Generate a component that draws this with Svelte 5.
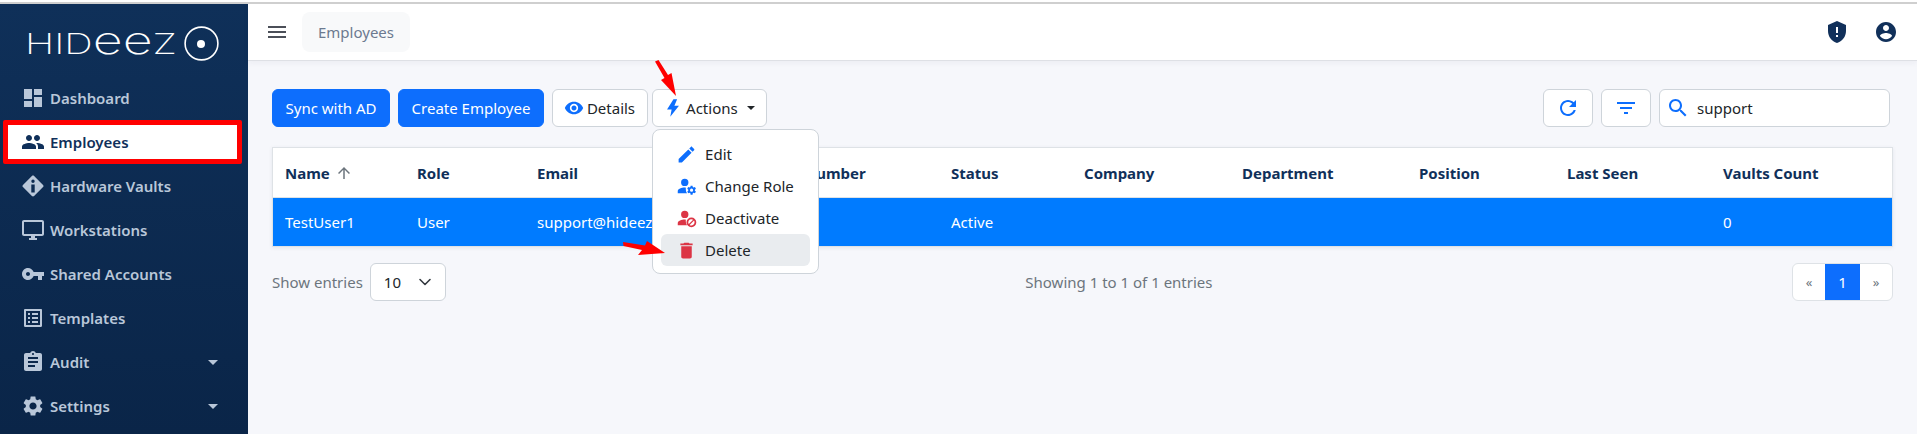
<script>
  const icons = {
    dashboard: 'M3 13h8V3H3v10zm0 8h8v-6H3v6zm10 0h8V11h-8v10zm0-18v6h8V3h-8z',
    people: 'M16 11c1.66 0 2.99-1.34 2.99-3S17.66 5 16 5c-1.66 0-3 1.34-3 3s1.34 3 3 3zm-8 0c1.66 0 2.99-1.34 2.99-3S9.66 5 8 5C6.34 5 5 6.34 5 8s1.34 3 3 3zm0 2c-2.33 0-7 1.17-7 3.5V19h14v-2.5c0-2.33-4.67-3.5-7-3.5zm8 0c-.29 0-.62.02-.97.05 1.16.84 1.97 1.97 1.97 3.45V19h6v-2.5c0-2.33-4.67-3.5-7-3.5z',
    vault: 'M12 1.5c-.4 0-.8.15-1.1.45L1.95 10.9c-.6.6-.6 1.6 0 2.2l8.95 8.95c.6.6 1.6.6 2.2 0l8.95-8.95c.6-.6.6-1.6 0-2.2L13.1 1.95c-.3-.3-.7-.45-1.1-.45zM12 5.6a1.7 1.7 0 1 1 0 3.4 1.7 1.7 0 0 1 0-3.4zM10.3 10.6h3.4v8h-3.4z',
    desktop: 'M21 2H3c-1.1 0-2 .9-2 2v12c0 1.1.9 2 2 2h7v2H8v2h8v-2h-2v-2h7c1.1 0 2-.9 2-2V4c0-1.1-.9-2-2-2zm0 14H3V4h18v12z',
    key: 'M12.65 10C11.83 7.67 9.61 6 7 6c-3.31 0-6 2.69-6 6s2.69 6 6 6c2.61 0 4.83-1.67 5.65-4H17v4h4v-4h2v-4H12.65zM7 14c-1.1 0-2-.9-2-2s.9-2 2-2 2 .9 2 2-.9 2-2 2z',
    list: 'M19 5v14H5V5h14m1.1-2H3.9c-.5 0-.9.4-.9.9v16.2c0 .4.4.9.9.9h16.2c.4 0 .9-.5.9-.9V3.9c0-.5-.5-.9-.9-.9zM11 7h6v2h-6V7zm0 4h6v2h-6v-2zm0 4h6v2h-6zM7 7h2v2H7zm0 4h2v2H7zm0 4h2v2H7z',
    assignment: 'M19 3h-4.18C14.4 1.84 13.3 1 12 1c-1.3 0-2.4.84-2.82 2H5c-1.1 0-2 .9-2 2v14c0 1.1.9 2 2 2h14c1.1 0 2-.9 2-2V5c0-1.1-.9-2-2-2zm-7 0c.55 0 1 .45 1 1s-.45 1-1 1-1-.45-1-1 .45-1 1-1zm2 14H7v-2h7v2zm3-4H7v-2h10v2zm0-4H7V7h10v2z',
    settings: 'M19.14 12.94c.04-.3.06-.61.06-.94 0-.32-.02-.64-.07-.94l2.03-1.58c.18-.14.23-.41.12-.61l-1.92-3.32c-.12-.22-.37-.29-.59-.22l-2.39.96c-.5-.38-1.03-.7-1.62-.94l-.36-2.54c-.04-.24-.24-.41-.48-.41h-3.84c-.24 0-.43.17-.47.41l-.36 2.54c-.59.24-1.13.57-1.62.94l-2.39-.96c-.22-.08-.47 0-.59.22L2.74 8.87c-.12.21-.08.47.12.61l2.03 1.58c-.05.3-.09.63-.09.94s.02.64.07.94l-2.03 1.58c-.18.14-.23.41-.12.61l1.92 3.32c.12.22.37.29.59.22l2.39-.96c.5.38 1.03.7 1.62.94l.36 2.54c.05.24.24.41.48.41h3.84c.24 0 .44-.17.47-.41l.36-2.54c.59-.24 1.13-.56 1.62-.94l2.39.96c.22.08.47 0 .59-.22l1.92-3.32c.12-.22.07-.47-.12-.61l-2.01-1.58zM12 15.6c-1.98 0-3.6-1.62-3.6-3.6s1.62-3.6 3.6-3.6 3.6 1.62 3.6 3.6-1.62 3.6-3.6 3.6z',
    menu: 'M3 18h18v-2H3v2zm0-5h18v-2H3v2zm0-7v2h18V6H3z',
    shield: 'M12 1L3 5v6c0 5.55 3.84 10.74 9 12 5.16-1.26 9-6.45 9-12V5l-9-4zm1 16h-2v-2h2v2zm0-4h-2V7h2v6z',
    account: 'M12 2C6.48 2 2 6.48 2 12s4.48 10 10 10 10-4.48 10-10S17.52 2 12 2zm0 3c1.66 0 3 1.34 3 3s-1.34 3-3 3-3-1.34-3-3 1.34-3 3-3zm0 14.2c-2.5 0-4.71-1.28-6-3.22.03-1.99 4-3.08 6-3.08 1.99 0 5.97 1.09 6 3.08-1.29 1.94-3.5 3.22-6 3.22z',
    eye: 'M12 4.5C7 4.5 2.73 7.61 1 12c1.73 4.39 6 7.5 11 7.5s9.27-3.11 11-7.5c-1.73-4.39-6-7.5-11-7.5zM12 17c-2.76 0-5-2.24-5-5s2.24-5 5-5 5 2.24 5 5-2.24 5-5 5zm0-8c-1.66 0-3 1.34-3 3s1.34 3 3 3 3-1.34 3-3-1.34-3-3-3z',
    bolt: 'M12.5 2.5 5.5 13.5h5L9 21.5 18.5 9.5h-5L16.5 2.5z',
    edit: 'M3 17.25V21h3.75L17.81 9.94l-3.75-3.75L3 17.25zM20.71 7.04c.39-.39.39-1.02 0-1.41l-2.34-2.34c-.39-.39-1.02-.39-1.41 0l-1.83 1.83 3.75 3.75 1.83-1.83z',
    role: 'M10 11.5a4.2 4.2 0 1 0 0-8.4 4.2 4.2 0 0 0 0 8.4zM11.2 13.3c-.4 0-.8-.05-1.2-.05-3.6 0-8 1.5-8 4.2v2.3h10.6a7 7 0 0 1-1.4-4.2c0-.8 0-1.5 0-2.25zM21.6 16.2c0-.2 0-.4-.05-.6l1.2-1-1.1-1.9-1.5.55c-.3-.25-.65-.45-1-.6l-.25-1.55h-2.2l-.25 1.55c-.35.15-.7.35-1 .6l-1.5-.55-1.1 1.9 1.2 1c-.05.2-.05.4-.05.6s0 .4.05.6l-1.2 1 1.1 1.9 1.5-.55c.3.25.65.45 1 .6l.25 1.55h2.2l.25-1.55c.35-.15.7-.35 1-.6l1.5.55 1.1-1.9-1.2-1c.05-.2.05-.4.05-.6zM17.8 18a1.8 1.8 0 1 1 0-3.6 1.8 1.8 0 0 1 0 3.6z',
    deactivate: 'M10 11.5a4.2 4.2 0 1 0 0-8.4 4.2 4.2 0 0 0 0 8.4zM11.2 13.3c-.4 0-.8-.05-1.2-.05-3.6 0-8 1.5-8 4.2v2.3h10.6a7 7 0 0 1-1.4-4.2c0-.8 0-1.5 0-2.25zM17.6 10.8a5.6 5.6 0 1 0 0 11.2 5.6 5.6 0 0 0 0-11.2zM14 16.4a3.6 3.6 0 0 1 5.6-3l-5 5a3.6 3.6 0 0 1-.6-2zm3.6 3.6c-.7 0-1.4-.2-2-.6l5-5a3.6 3.6 0 0 1-3 5.6z',
    trash: 'M6 19c0 1.1.9 2 2 2h8c1.1 0 2-.9 2-2V7H6v12zM19 4h-3.5l-1-1h-5l-1 1H5v2h14V4z',
    refresh: 'M17.65 6.35C16.2 4.9 14.21 4 12 4c-4.42 0-7.99 3.58-7.99 8s3.57 8 7.99 8c3.73 0 6.84-2.55 7.73-6h-2.08c-.82 2.33-3.04 4-5.65 4-3.31 0-6-2.69-6-6s2.69-6 6-6c1.66 0 3.14.69 4.22 1.78L13 11h7V4l-2.35 2.35z',
    filter: 'M10 18h4v-2h-4v2zM3 6v2h18V6H3zm3 7h12v-2H6v2z',
    search: 'M15.5 14h-.79l-.28-.27C15.41 12.59 16 11.11 16 9.5 16 5.91 13.09 3 9.5 3S3 5.91 3 9.5 5.91 16 9.5 16c1.61 0 3.09-.59 4.23-1.57l.27.28v.79l5 4.99L20.49 19l-4.99-5zm-6 0C7.01 14 5 11.99 5 9.5S7.01 5 9.5 5 14 7.01 14 9.5 11.99 14 9.5 14z',
    up: 'M4 12l1.41 1.41L11 7.83V20h2V7.83l5.58 5.59L20 12l-8-8-8 8z'
  };

  const nav = [
    { label: 'Dashboard', icon: 'dashboard' },
    { label: 'Employees', icon: 'people', active: true },
    { label: 'Hardware Vaults', icon: 'vault' },
    { label: 'Workstations', icon: 'desktop' },
    { label: 'Shared Accounts', icon: 'key' },
    { label: 'Templates', icon: 'list' },
    { label: 'Audit', icon: 'assignment', caret: true },
    { label: 'Settings', icon: 'settings', caret: true }
  ];

  const columns = ['Name', 'Role', 'Email', 'Phone Number', 'Status', 'Company', 'Department', 'Position', 'Last Seen', 'Vaults Count'];
  const row = ['TestUser1', 'User', 'support@hideez.com', '', 'Active', '', '', '', '', '0'];

  const actions = [
    { label: 'Edit', icon: 'edit', tone: 'blue' },
    { label: 'Change Role', icon: 'role', tone: 'blue' },
    { label: 'Deactivate', icon: 'deactivate', tone: 'red' },
    { label: 'Delete', icon: 'trash', tone: 'red', hover: true }
  ];
</script>

{#snippet icon(name, size, cls = '')}
  <svg class={cls} width={size} height={size} viewBox="0 0 24 24" fill="currentColor" fill-rule="evenodd" aria-hidden="true"><path d={icons[name]} /></svg>
{/snippet}

<div class="page">
  <div class="app">
    <aside class="sidebar">
      <div class="logo">
        <svg width="194" height="36" viewBox="0 0 194 36" aria-hidden="true">
          <text x="-2" y="28" textLength="152" lengthAdjust="spacingAndGlyphs" class="logo-text">HID<tspan class="logo-e">ee</tspan>Z</text>
          <circle cx="174.5" cy="17.5" r="16.4" fill="none" stroke="#fff" stroke-width="1.6" />
          <circle cx="174" cy="18" r="4" fill="#fff" />
        </svg>
      </div>
      <nav class="menu">
        {#each nav as item}
          <div class="nav-item" class:active={item.active}>
            {@render icon(item.icon, 24)}
            <span class="nav-label">{item.label}</span>
            {#if item.caret}<span class="nav-caret"></span>{/if}
          </div>
        {/each}
      </nav>
    </aside>

    <div class="main">
      <header class="topbar">
        {@render icon('menu', 24, 'burger')}
        <div class="crumb">Employees</div>
        <div class="top-right">
          {@render icon('shield', 24)}
          {@render icon('account', 24)}
        </div>
      </header>

      <section class="content">
        <div class="toolbar">
          <button class="btn primary">Sync with AD</button>
          <button class="btn primary">Create Employee</button>
          <button class="btn outline details">{@render icon('eye', 20, 'blue')}Details</button>
          <div class="actions-wrap">
            <button class="btn outline actions">
              {@render icon('bolt', 22, 'blue')}Actions<span class="caret"></span>
            </button>
            <div class="dropdown">
              {#each actions as a}
                <div class="drop-item" class:hover={a.hover}>
                  {@render icon(a.icon, 21, a.tone)}
                  <span>{a.label}</span>
                </div>
              {/each}
            </div>
          </div>
          <div class="spacer"></div>
          <button class="btn outline square">{@render icon('refresh', 24, 'blue')}</button>
          <button class="btn outline square">{@render icon('filter', 24, 'blue')}</button>
          <div class="search">
            {@render icon('search', 24, 'blue')}
            <span>support</span>
          </div>
        </div>

        <div class="table">
          <div class="tr head">
            {#each columns as c, i}
              <div class="td">{c}{#if i === 0}{@render icon('up', 18, 'sort')}{/if}</div>
            {/each}
          </div>
          <div class="tr selected">
            {#each row as v}
              <div class="td">{v}</div>
            {/each}
          </div>
        </div>

        <div class="footer">
          <div class="entries">
            <span>Show entries</span>
            <div class="select">
              <span>10</span>
              <svg width="16" height="16" viewBox="0 0 16 16" fill="none" stroke="#343a40" stroke-width="1.6" stroke-linecap="round" stroke-linejoin="round" aria-hidden="true"><path d="M3 5.5 8 10.5l5-5" /></svg>
            </div>
          </div>
          <div class="showing">Showing 1 to 1 of 1 entries</div>
          <div class="pager">
            <span class="page-link">«</span>
            <span class="page-link current">1</span>
            <span class="page-link">»</span>
          </div>
        </div>
      </section>
    </div>

    <svg class="arrow arrow-top" width="26" height="36" viewBox="0 0 26 36" aria-hidden="true">
      <path d="M0 1.5 3.5 0 13 15 16.5 13 21 36 6 20 9.5 18z" fill="#f00" />
    </svg>
    <svg class="arrow arrow-del" width="44" height="16" viewBox="0 0 44 16" aria-hidden="true">
      <path d="M0 1 .5 5 19 9 15 14 42 12 24 0 22 4.5z" fill="#f00" />
    </svg>
  </div>
</div>

<style>
  :global(body) {
    margin: 0;
    background: #f6f7fb;
  }

  .page {
    padding-top: 2px;
    background: #fff;
  }

  .app {
    position: relative;
    display: flex;
    height: 432px;
    overflow: hidden;
    border-top: 2px solid #cfcfcf;
    box-sizing: border-box;
    background: #f6f7fb;
    font-family: "Noto Sans", "Open Sans", sans-serif;
    font-size: 15px;
    color: #212529;
  }

  .sidebar {
    width: 248px;
    flex: none;
    background: linear-gradient(180deg, #0f3059, #0a2548);
  }

  .logo {
    height: 72px;
    padding: 22px 0 0 27px;
    box-sizing: border-box;
  }

  .logo svg {
    display: block;
    overflow: visible;
  }

  .logo-text {
    font-family: Inter, sans-serif;
    font-weight: 200;
    font-size: 29px;
    fill: #fff;
  }

  .logo-e {
    font-size: 38px;
  }

  .menu {
    display: flex;
    flex-direction: column;
  }

  .nav-item {
    display: flex;
    align-items: center;
    height: 44px;
    box-sizing: border-box;
    padding: 0 30px 0 21px;
    gap: 5px;
    color: #b9c7d9;
    font-weight: 600;
  }

  .nav-item svg {
    flex: none;
  }

  .nav-item.active {
    margin: 0 6px 0 3px;
    padding-left: 13px;
    background: #fff;
    border: 5px solid #f00;
    border-radius: 2px;
    color: #10305a;
  }

  .nav-label {
    flex: 1;
  }

  .nav-caret {
    border-top: 5px solid #b9c7d9;
    border-left: 5px solid transparent;
    border-right: 5px solid transparent;
  }

  .main {
    flex: 1;
    min-width: 0;
    display: flex;
    flex-direction: column;
  }

  .topbar {
    height: 57px;
    flex: none;
    box-sizing: border-box;
    background: #fff;
    border-bottom: 1px solid #dee0e5;
    box-shadow: 0 2px 6px rgba(30, 40, 80, .05);
    display: flex;
    align-items: center;
    padding: 0 19px 0 17px;
    color: #4b4f58;
  }

  :global(.burger) {
    margin-right: 13px;
  }

  .crumb {
    height: 40px;
    line-height: 40px;
    padding: 0 16px;
    border-radius: 8px;
    background: #f8f9fa;
    color: #6c7a90;
    font-size: 15px;
  }

  .top-right {
    margin-left: auto;
    display: flex;
    gap: 25px;
    color: #11305a;
  }

  .content {
    padding: 28px 24px 0;
  }

  .toolbar {
    display: flex;
    align-items: center;
    gap: 8px;
    height: 38px;
    padding-right: 3px;
  }

  .btn {
    height: 38px;
    box-sizing: border-box;
    border-radius: 6px;
    font: inherit;
    display: inline-flex;
    align-items: center;
    justify-content: center;
    padding: 0 12.5px;
    white-space: nowrap;
  }

  .primary {
    background: #0d6efd;
    border: 1px solid #0d6efd;
    color: #fff;
  }

  .outline {
    background: #fff;
    border: 1px solid #ced4da;
    color: #212529;
  }

  .details {
    gap: 3px;
    padding: 0 12px 0 11px;
  }

  .actions {
    gap: 2.5px;
    padding: 0 11px 0 8.5px;
  }

  .caret {
    margin-left: 6.5px;
    border-top: 4.5px solid #212529;
    border-left: 4.5px solid transparent;
    border-right: 4.5px solid transparent;
  }

  .square {
    width: 50px;
    padding: 0;
  }

  :global(.blue) {
    color: #0d6efd;
  }

  :global(.red) {
    color: #dc3545;
  }

  .actions-wrap {
    position: relative;
    margin-left: -4px;
  }

  .dropdown {
    position: absolute;
    top: 40px;
    left: 0;
    width: 167px;
    box-sizing: border-box;
    background: #fff;
    border: 1px solid #ced4da;
    border-radius: 8px;
    padding: 8px 8px 7px;
    z-index: 5;
  }

  .drop-item {
    height: 32px;
    display: flex;
    align-items: center;
    gap: 8px;
    padding: 0 15px;
    border-radius: 6px;
    white-space: nowrap;
  }

  .drop-item.hover {
    background: #e9ecef;
  }

  .spacer {
    flex: 1;
  }

  .search {
    width: 231px;
    height: 38px;
    box-sizing: border-box;
    background: #fff;
    border: 1px solid #ced4da;
    border-radius: 6px;
    display: flex;
    align-items: center;
    gap: 7px;
    padding: 0 6px;
  }

  .table {
    margin-top: 20px;
    background: #fff;
    border: 1px solid #dee2e6;
    box-shadow: 0 1px 4px rgba(30, 40, 80, .08);
  }

  .tr {
    display: grid;
    grid-template-columns: 131px 120px 216px 198px 133px 158px 177px 148px 156px 1fr;
    align-items: center;
  }

  .head {
    height: 50px;
    box-sizing: border-box;
    font-weight: 700;
    color: #10305a;
    border-bottom: 1px solid #dee2e6;
  }

  .td {
    padding: 0 13px;
    display: flex;
    align-items: center;
    gap: 5px;
    white-space: nowrap;
  }

  .td:first-child {
    padding-left: 12px;
  }

  :global(.sort) {
    color: #6c757d;
  }

  .selected {
    height: 48px;
    background: #007bff;
    color: #fff;
  }

  .footer {
    margin-top: 16px;
    display: flex;
    justify-content: space-between;
    align-items: center;
  }

  .entries {
    display: flex;
    align-items: center;
    gap: 7px;
    color: #6c757d;
  }

  .select {
    width: 76px;
    height: 38px;
    box-sizing: border-box;
    background: #fff;
    border: 1px solid #ced4da;
    border-radius: 6px;
    display: flex;
    align-items: center;
    justify-content: space-between;
    padding: 0 12px 0 13px;
    color: #212529;
  }

  .showing {
    color: #6c757d;
  }

  .pager {
    display: flex;
    height: 38px;
    box-sizing: border-box;
    background: #fff;
    border: 1px solid #dee2e6;
    border-radius: 6px;
    overflow: hidden;
  }

  .page-link {
    width: 32px;
    display: flex;
    align-items: center;
    justify-content: center;
    color: #6c757d;
    font-size: 13px;
  }

  .page-link.current {
    width: 35px;
    background: #0d6efd;
    color: #fff;
    font-size: 15px;
  }

  .arrow {
    position: absolute;
    z-index: 10;
  }

  .arrow-top {
    left: 655px;
    top: 56px;
  }

  .arrow-del {
    left: 623px;
    top: 237px;
  }
</style>
